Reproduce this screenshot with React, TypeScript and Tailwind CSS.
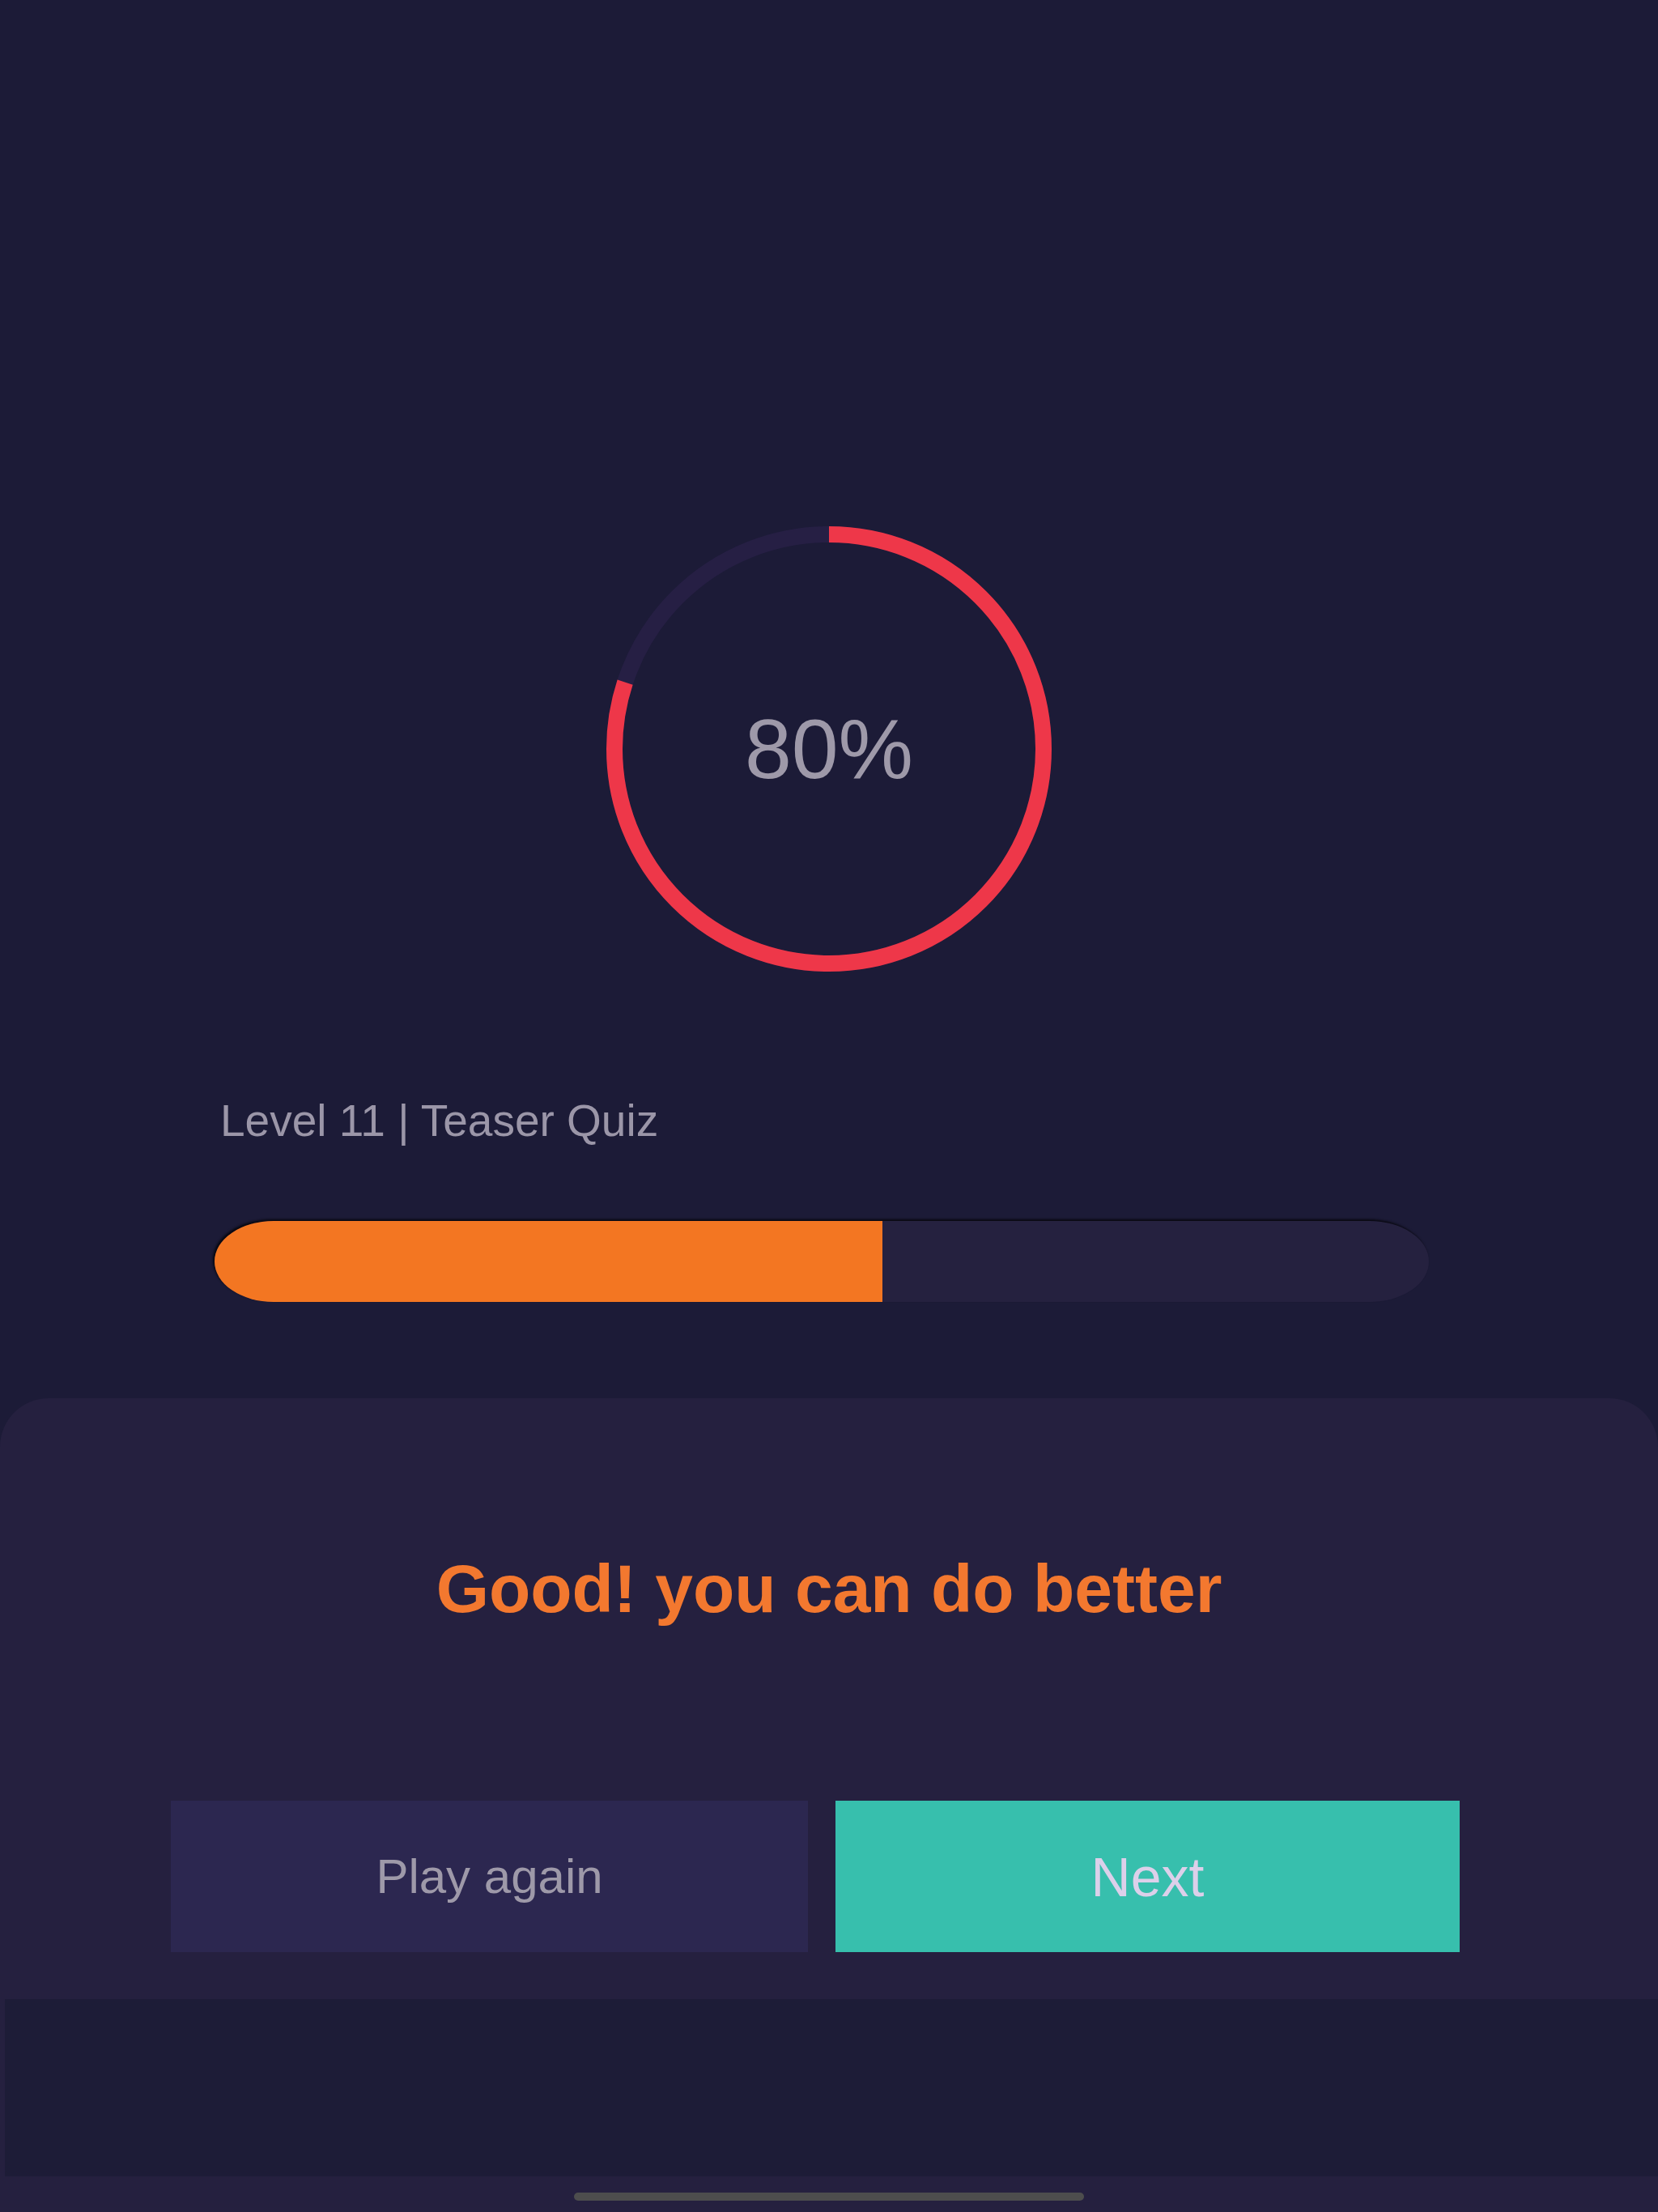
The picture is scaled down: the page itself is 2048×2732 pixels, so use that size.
import React from "react";

const RING_SIZE = 550;
const STROKE = 20;

function ScoreRing({ percent }: { percent: number }) {
  const r = (RING_SIZE - STROKE) / 2;
  const circ = 2 * Math.PI * r;
  const filled = (circ * percent) / 100;

  return (
    <div className="relative w-[550px] h-[550px]">
      <svg width={RING_SIZE} height={RING_SIZE} className="-rotate-90">
        <circle cx={RING_SIZE / 2} cy={RING_SIZE / 2} r={r} fill="none" stroke="#261f44" strokeWidth={STROKE} />
        <circle
          cx={RING_SIZE / 2}
          cy={RING_SIZE / 2}
          r={r}
          fill="none"
          stroke="#ee3749"
          strokeWidth={STROKE}
          strokeDasharray={`${filled} ${circ}`}
        />
      </svg>
      <div className="absolute inset-0 flex items-center justify-center">
        <span className="text-[104px] leading-none text-[#9e99a9]">{percent}%</span>
      </div>
    </div>
  );
}

export default function App() {
  const progress = 55;

  return (
    <div
      className="w-[2048px] h-[2732px] bg-[#1c1b37] flex flex-col overflow-hidden"
      style={{ fontFamily: '"Liberation Sans", Arial, sans-serif' }}
    >
      {/* score + level progress */}
      <div className="h-[1727px] flex flex-col">
        <div className="pt-[650px] flex justify-center">
          <ScoreRing percent={80} />
        </div>

        <div className="ml-[265px] w-[1500px] flex flex-col">
          <p className="mt-[157px] pl-[7px] text-[55px] leading-none text-[#9b96a8]">Level 11 | Teaser Quiz</p>

          <div className="mt-[96px] h-[100px] rounded-[73px_/_50px] bg-[#25213f] overflow-hidden shadow-[-2px_-2px_3px_rgba(0,0,0,0.75)]">
            <div className="h-full bg-[#f37622] rounded-l-[73px_/_50px]" style={{ width: `${progress}%` }} />
          </div>
        </div>
      </div>

      {/* result sheet */}
      <div className="flex-1 bg-[#25203f] rounded-t-[60px] flex flex-col">
        <h1 className="mt-[193px] text-center text-[84px] leading-none font-bold text-[#f3782f]">
          Good! you can do better
        </h1>

        <div className="mt-[220px] ml-[211px] flex gap-[34px]">
          <button className="w-[787px] h-[187px] bg-[#2c2750] text-[60px] text-[#9e99a9] flex items-center justify-center">
            Play again
          </button>
          <button className="w-[771px] h-[187px] bg-[#37bfad] text-[68px] text-[#dcd0ea] flex items-center justify-center">
            Next
          </button>
        </div>

        <div className="mt-[58px] ml-[6px] h-[219px] bg-[#1d1c37]" />

        <div className="mt-[20px] mx-auto w-[630px] h-[10px] rounded-full bg-[#4d4d4d]" />
      </div>
    </div>
  );
}
